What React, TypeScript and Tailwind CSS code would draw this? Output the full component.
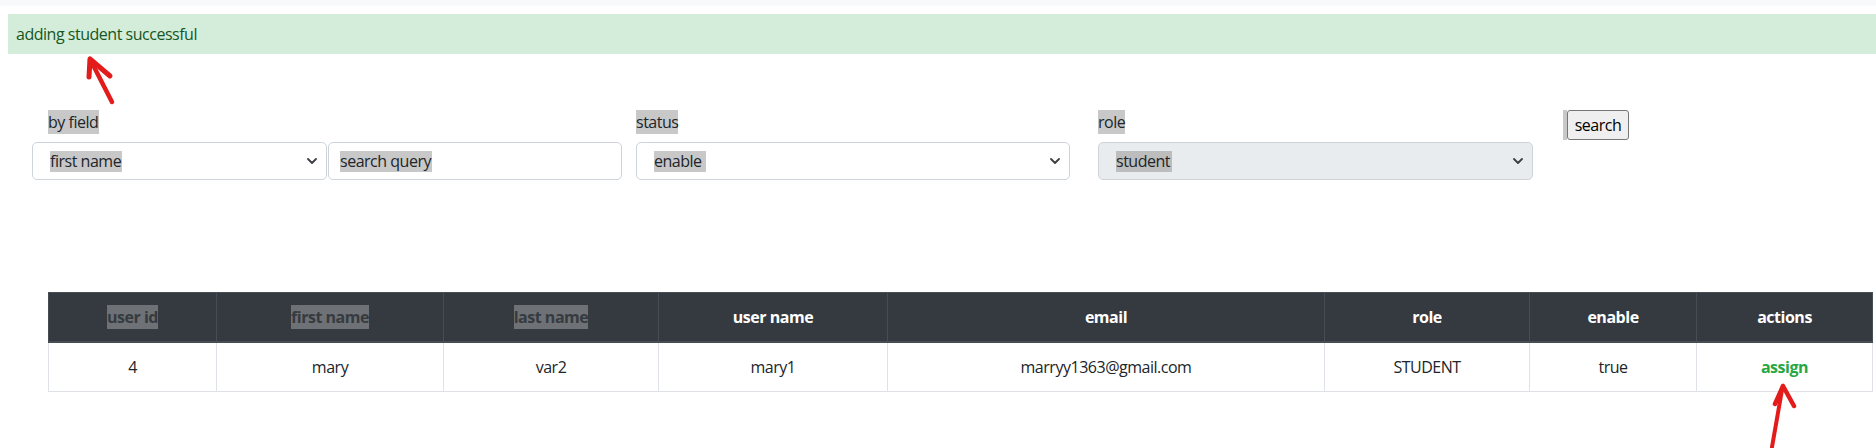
import React from "react";

function Chevron() {
  return (
    <svg width="10" height="6" viewBox="0 0 10 6" className="shrink-0">
      <path d="M1 1l4 4 4-4" fill="none" stroke="#3b3f44" strokeWidth="1.8" strokeLinecap="round" strokeLinejoin="round" />
    </svg>
  );
}

const cols = [
  { h: "user id", v: "4", hl: true },
  { h: "first name", v: "mary", hl: true },
  { h: "last name", v: "var2", hl: true },
  { h: "user name", v: "mary1" },
  { h: "email", v: "marryy1363@gmail.com" },
  { h: "role", v: "STUDENT" },
  { h: "enable", v: "true" },
  { h: "actions", v: "assign", green: true },
];

export default function App() {
  return (
    <div className="relative w-[1876px] h-[448px] bg-white font-['Open_Sans',sans-serif] text-[16px] tracking-[-0.03em] text-[#212529] overflow-hidden">
      <div className="h-[6px] bg-[#f8f9fa]" />
      <div className="mt-[8px] ml-[8px] h-[40px] bg-[#d4edda] text-[#155724] flex items-center pl-[8px]">
        adding student successful
      </div>

      <div className="mt-[56px] flex items-start">
        <div className="ml-[32px] flex flex-col">
          <div className="ml-[16px] h-[24px] leading-6 mb-[8px]">
            <span className="inline-block bg-[#c8c8c8] leading-6 pr-[1px]">by field</span>
          </div>
          <div className="flex">
            <div className="w-[295px] h-[38px] border border-[#ced4da] rounded-[5px] bg-white flex items-center justify-between pl-[17px] pr-[9px]">
              <span className="inline-block h-[21px] leading-[21px] bg-[#c8c8c8] pr-[1px]">first name</span>
              <Chevron />
            </div>
            <div className="ml-[1px] w-[294px] h-[38px] border border-[#ced4da] rounded-[5px] bg-white flex items-center pl-[11px]">
              <span className="inline-block h-[21px] leading-[21px] bg-[#c8c8c8] pr-[1px]">search query</span>
            </div>
          </div>
        </div>

        <div className="ml-[14px] flex flex-col">
          <div className="h-[24px] leading-6 mb-[8px]">
            <span className="inline-block bg-[#c8c8c8] leading-6">status</span>
          </div>
          <div className="w-[434px] h-[38px] border border-[#ced4da] rounded-[5px] bg-white flex items-center justify-between pl-[17px] pr-[9px]">
            <span className="inline-block h-[21px] leading-[21px] bg-[#c8c8c8] pr-[4px]">enable</span>
            <Chevron />
          </div>
        </div>

        <div className="ml-[28px] flex flex-col">
          <div className="h-[24px] leading-6 mb-[8px]">
            <span className="inline-block bg-[#c8c8c8] leading-6">role</span>
          </div>
          <div className="w-[435px] h-[38px] border border-[#ced4da] rounded-[5px] bg-[#e9ecef] flex items-center justify-between pl-[17px] pr-[9px]">
            <span className="inline-block h-[21px] leading-[21px] bg-[#bdbdbd] pr-[2px]">student</span>
            <Chevron />
          </div>
        </div>

        <div className="ml-[30px] flex items-stretch h-[30px]">
          <div className="w-[4px] bg-[#c8c8c8]" />
          <button className="w-[62px] h-[30px] border border-[#767676] rounded-[3px] bg-[#efefef] text-[#000] flex items-center justify-center leading-none">
            search
          </button>
        </div>
      </div>

      <div className="mt-[112px] ml-[48px] w-[1825px]">
        <div className="grid grid-cols-[169px_227px_215px_229px_437px_205px_167px_176px]">
          {cols.map((c, i) => (
            <div
              key={c.h}
              className={`bg-[#343a40] border-t border-r border-b-2 border-[#454d55] ${i === 0 ? "border-l" : ""} py-3 text-center font-bold text-white leading-6`}
            >
              {c.hl ? (
                <span className="inline-block bg-[#6e7175] text-[#363b40] leading-6">{c.h}</span>
              ) : (
                c.h
              )}
            </div>
          ))}
        </div>
        <div className="grid grid-cols-[169px_227px_215px_229px_437px_205px_167px_176px]">
          {cols.map((c, i) => (
            <div
              key={c.h}
              className={`bg-white border-r border-b border-[#dee2e6] ${i === 0 ? "border-l" : ""} py-3 text-center leading-6 ${c.green ? "font-bold text-[#28a745]" : ""}`}
            >
              {c.v}
            </div>
          ))}
        </div>
      </div>

      <svg className="absolute left-0 top-0 pointer-events-none" width="1876" height="448" viewBox="0 0 1876 448">
        <g fill="none" stroke="#e31b1b" strokeLinecap="round" strokeLinejoin="round">
          <path d="M90 59 L89 77 M90 59 L110 76" strokeWidth="5" />
          <path d="M92 63 L112 102" strokeWidth="4.5" />
          <path d="M1783 386 L1775 404 M1783 386 L1794 406" strokeWidth="4.5" />
          <path d="M1782 390 L1772 447" strokeWidth="4" />
        </g>
      </svg>
    </div>
  );
}
